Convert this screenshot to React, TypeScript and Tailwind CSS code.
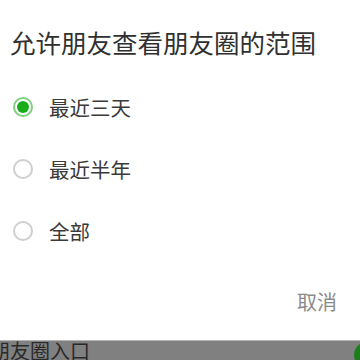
import React from "react";

const font = { fontFamily: '"Noto Sans CJK SC", "Noto Sans", sans-serif' };

function Radio({ checked }: { checked: boolean }) {
  if (checked) {
    return (
      <div className="w-[20px] h-[20px] rounded-full border-2 border-[#7fd07f] flex items-center justify-center shrink-0">
        <div className="w-[12px] h-[12px] rounded-full bg-[#1aad19]" />
      </div>
    );
  }
  return <div className="w-[20px] h-[20px] rounded-full border-2 border-[#cfcfcf] shrink-0" />;
}

export default function App() {
  const options = [
    { label: "最近三天", checked: true },
    { label: "最近半年", checked: false },
    { label: "全部", checked: false },
  ];
  return (
    <div className="w-[360px] h-[360px] flex flex-col overflow-hidden bg-white" style={font}>
      <div className="h-[340px] bg-white flex flex-col">
        <div className="pt-[25px] pl-[10px] h-[59px] text-[25.5px] leading-[34px] text-[#303030]">
          允许朋友查看朋友圈的范围
        </div>
        <div className="mt-[17px] flex flex-col">
          {options.map((o) => (
            <div key={o.label} className="h-[62px] flex items-center pl-[13px] gap-[16px]">
              <Radio checked={o.checked} />
              <span className="text-[20.5px] leading-[28px] text-[#3a3a3a]">{o.label}</span>
            </div>
          ))}
        </div>
        <div className="mt-[26px] flex justify-end pr-[23px]">
          <span className="text-[20px] leading-[28px] text-[#8a8a8a]">取消</span>
        </div>
      </div>
      <div className="h-[20px] bg-[#808080] border-t border-[#b5b5b5] flex items-center overflow-hidden">
        <span className="ml-[-10px] text-[20px] leading-[20px] text-[#2a2a2a] whitespace-nowrap">朋友圈入口</span>
        <div className="flex-1" />
        <div className="w-[26px] h-[26px] rounded-full bg-[#1b7d1b] mr-[-20px] mt-[8px] shrink-0" />
      </div>
    </div>
  );
}
